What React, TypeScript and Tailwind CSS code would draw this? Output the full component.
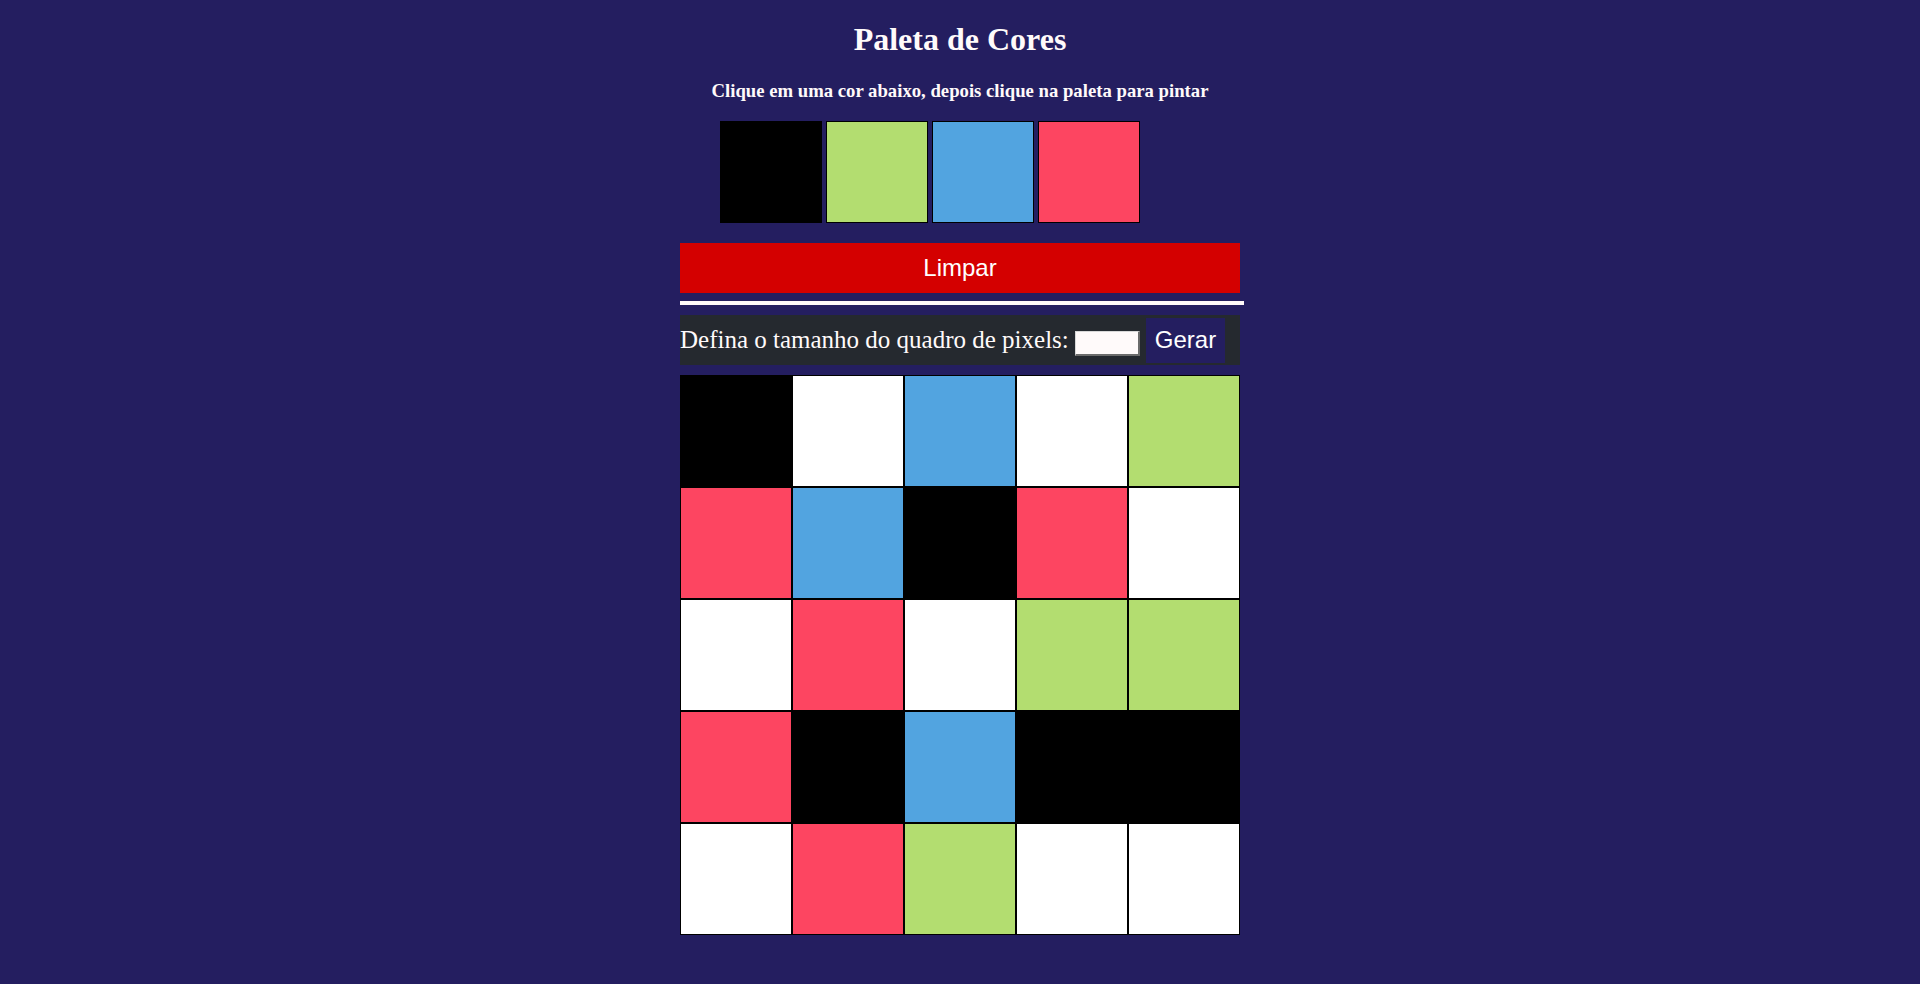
import React from "react";

const G = "bg-[#b3dd70]";
const B = "bg-[#52a4e0]";
const R = "bg-[#fd4561]";
const K = "bg-black";
const W = "bg-white";

const grid: string[][] = [
  [K, W, B, W, G],
  [R, B, K, R, W],
  [W, R, W, G, G],
  [R, K, B, K, K],
  [W, R, G, W, W],
];

const palette = [K, G, B, R];

export default function App() {
  return (
    <div className="min-h-[984px] bg-[#241e60] font-['Liberation_Serif',serif] text-[#fffafa]">
      <div className="w-[560px] mx-auto">
        <h1 className="pt-[21px] text-[32px] leading-[36px] font-bold text-center">
          Paleta de Cores
        </h1>
        <h3 className="mt-[23px] text-[18.72px] leading-[21px] font-bold text-center">
          Clique em uma cor abaixo, depois clique na paleta para pintar
        </h3>
        <ul className="mt-[20px] pl-[40px] flex gap-[4px]">
          {palette.map((c, i) => (
            <li key={i} className={`w-[102px] h-[102px] border border-black ${c}`} />
          ))}
        </ul>
        <button className="mt-[20px] block h-[50px] w-full bg-[#d40000] text-white text-[24px] font-['Liberation_Sans',Arial,sans-serif]">
          Limpar
        </button>
        <div className="mt-[8px] h-[4px] w-[564px] bg-[#fffafa]" />
        <div className="mt-[10px] h-[50px] bg-[#25292f] flex items-center">
          <span className="text-[25px] leading-[28px] whitespace-nowrap">
            Defina o tamanho do quadro de pixels:
          </span>
          <input
            type="number"
            className="ml-[6px] mt-[7px] w-[65px] h-[25px] bg-[#fffafa] border-solid border-t border-l border-r-2 border-b-2 border-t-[#d8d8d8] border-l-[#d8d8d8] border-r-[#6b6b6b] border-b-[#6b6b6b] outline-none"
          />
          <button className="ml-[6px] h-[45px] px-[9px] bg-[#241e60] text-white text-[24px] font-['Liberation_Sans',Arial,sans-serif]">
            Gerar
          </button>
        </div>
        <div className="mt-[10px] grid grid-cols-5">
          {grid.flat().map((c, i) => (
            <div key={i} className={`h-[112px] border border-black ${c}`} />
          ))}
        </div>
      </div>
    </div>
  );
}
